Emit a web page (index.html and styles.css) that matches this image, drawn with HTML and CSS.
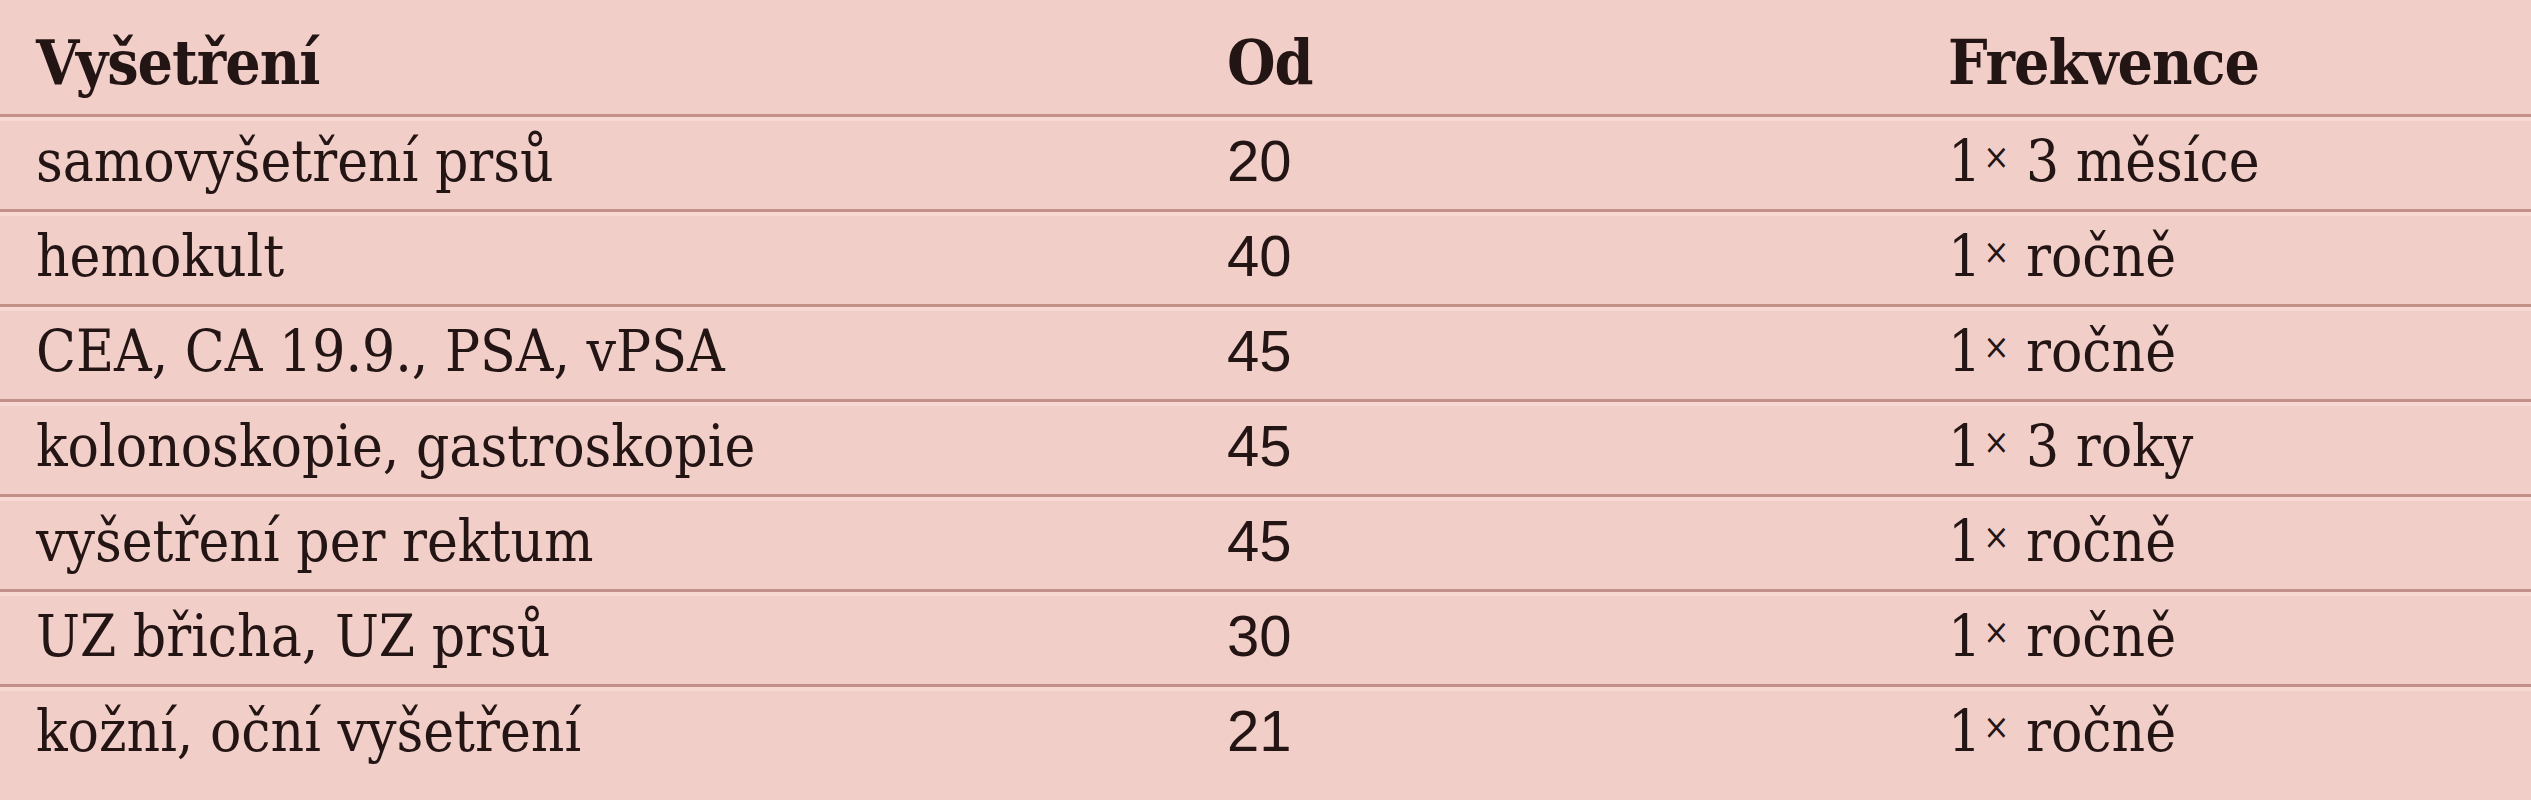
FILE: index.html
```html
<!DOCTYPE html>
<html lang="cs">
<head>
<meta charset="utf-8">
<title>Vyšetření</title>
<link rel="stylesheet" href="styles.css">
</head>
<body>
<div class="table">
  <div class="row head">
    <div class="cell">Vyšetření</div>
    <div class="cell">Od</div>
    <div class="cell">Frekvence</div>
  </div>
  <div class="row">
    <div class="cell">samovyšetření prsů</div>
    <div class="cell num">20</div>
    <div class="cell">1<span class="times">×</span> 3 měsíce</div>
  </div>
  <div class="row">
    <div class="cell">hemokult</div>
    <div class="cell num">40</div>
    <div class="cell">1<span class="times">×</span> ročně</div>
  </div>
  <div class="row">
    <div class="cell">CEA, CA 19.9., PSA, vPSA</div>
    <div class="cell num">45</div>
    <div class="cell">1<span class="times">×</span> ročně</div>
  </div>
  <div class="row">
    <div class="cell">kolonoskopie, gastroskopie</div>
    <div class="cell num">45</div>
    <div class="cell">1<span class="times">×</span> 3 roky</div>
  </div>
  <div class="row">
    <div class="cell">vyšetření per rektum</div>
    <div class="cell num">45</div>
    <div class="cell">1<span class="times">×</span> ročně</div>
  </div>
  <div class="row">
    <div class="cell">UZ břicha, UZ prsů</div>
    <div class="cell num">30</div>
    <div class="cell">1<span class="times">×</span> ročně</div>
  </div>
  <div class="row last">
    <div class="cell">kožní, oční vyšetření</div>
    <div class="cell num">21</div>
    <div class="cell">1<span class="times">×</span> ročně</div>
  </div>
</div>
</body>
</html>
```
FILE: styles.css
```css
html, body {
  margin: 0;
  padding: 0;
  background: #f2cec9;
}
body {
  width: 2531px;
  height: 800px;
  overflow: hidden;
  color: #241515;
  font-family: "DejaVu Serif Condensed", "DejaVu Serif", serif;
  font-stretch: condensed;
}
.table {
  display: flex;
  flex-direction: column;
}
.row {
  display: grid;
  grid-template-columns: 1191px 721px 1fr;
  padding-left: 36px;
  box-sizing: border-box;
  height: 95px;
  border-top: 3px solid #c38f89;
  box-shadow: inset 0 4px 0 #f8d8d3;
  font-size: 58px;
  line-height: 58px;
  padding-top: 15px;
}
.row.head {
  height: 114px;
  border-top: none;
  box-shadow: none;
  font-size: 62px;
  line-height: 62px;
  font-weight: bold;
  letter-spacing: -1px;
  padding-top: 32px;
}
.row.last {
  height: 116px;
}
.cell {
  white-space: nowrap;
}
.num {
  font-family: "Liberation Sans", Arial, sans-serif;
  font-stretch: normal;
}
.times {
  font-size: 0.6em;
  line-height: 0;
  position: relative;
  top: -0.35em;
  margin-left: 2px;
}
```
